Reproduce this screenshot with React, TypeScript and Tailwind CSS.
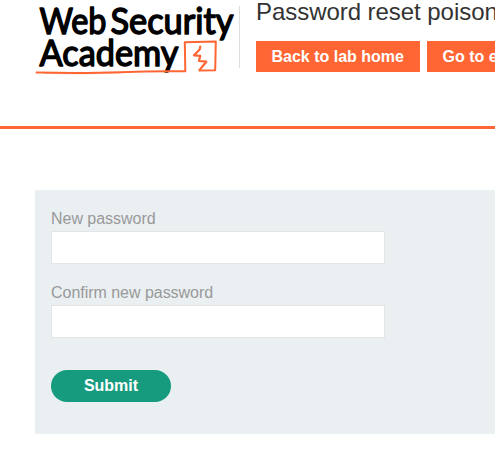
import type { ReactNode } from 'react';

function Logo() {
  return (
    <svg
      className="block shrink-0"
      width="204"
      height="80"
      viewBox="35 0 204 80"
      role="img"
      aria-label="Web Security Academy"
    >
      <g
        fill="#000"
        stroke="#000"
        strokeWidth="1.5"
        strokeLinejoin="round"
        fontFamily="Lato, 'Liberation Sans', sans-serif"
        fontWeight="400"
        fontSize="36.5"
      >
        <text x="39.5" y="34" textLength="67" lengthAdjust="spacingAndGlyphs">Web</text>
        <text x="110.5" y="34" textLength="123" lengthAdjust="spacingAndGlyphs">Security</text>
        <text x="39.5" y="66.2" textLength="139" lengthAdjust="spacingAndGlyphs">Academy</text>
      </g>
      <g fill="none" stroke="#ff6633" strokeLinejoin="round" strokeLinecap="round">
        <path d="M36.5 72.6 Q85 73.6 120 72.2 T185.3 71.3 L184.8 42.2 L215.8 41.6 L215.2 70.2 L199.5 70.5" strokeWidth="2" />
        <path d="M45 73.4 Q85 74.5 120 73" strokeWidth="0.7" opacity="0.5" />
        <path d="M200.3 46.5 L199.7 49.5 L194 55.3 L200.2 55.9 L199 61 L206.3 61.7 L199.6 70" strokeWidth="2.2" />
      </g>
    </svg>
  );
}

function HeaderButton({ children }: { children: ReactNode }) {
  return (
    <a className="block h-[31px] shrink-0 whitespace-nowrap bg-[#ff6633] pr-4 pl-[15.5px] text-base leading-[31px] font-bold text-white">
      {children}
    </a>
  );
}

function Field({ label, id }: { label: string; id: string }) {
  return (
    <div className="flex flex-col">
      <label htmlFor={id} className="h-[25px] text-base leading-[25px] tracking-[-0.03px] text-[#999]">
        {label}
      </label>
      <input
        id={id}
        type="password"
        className="h-[33px] w-[334px] border border-[#e4e4e4] bg-white px-2 outline-none"
      />
    </div>
  );
}

export default function App() {
  return (
    <div className="h-[473px] w-full overflow-hidden bg-white font-['Liberation_Sans',Arial,sans-serif]">
      <header className="flex h-[129px] border-b-3 border-[#ff6633] pl-[35px]">
        <Logo />
        <div className="mt-1.5 h-[62px] w-px shrink-0 bg-[#dedede]" />
        <div className="ml-4 min-w-0 flex-1">
          <h1 className="h-[41px] whitespace-nowrap text-2xl leading-[24px] tracking-[-0.05px] text-[#333]">Password reset poison</h1>
          <nav className="flex gap-[7px]">
            <HeaderButton>Back to lab home</HeaderButton>
            <HeaderButton>Go to e</HeaderButton>
          </nav>
        </div>
      </header>
      <main className="pt-[61px] pl-[35px]">
        <form className="flex h-[244px] flex-col gap-4 bg-[#eaeff2] px-4 pt-4">
          <Field label="New password" id="new-password" />
          <Field label="Confirm new password" id="confirm-password" />
          <button
            type="button"
            className="mt-4 h-8 w-[120px] rounded-full bg-[#179b7f] text-base leading-8 font-bold text-white"
          >
            Submit
          </button>
        </form>
      </main>
    </div>
  );
}
